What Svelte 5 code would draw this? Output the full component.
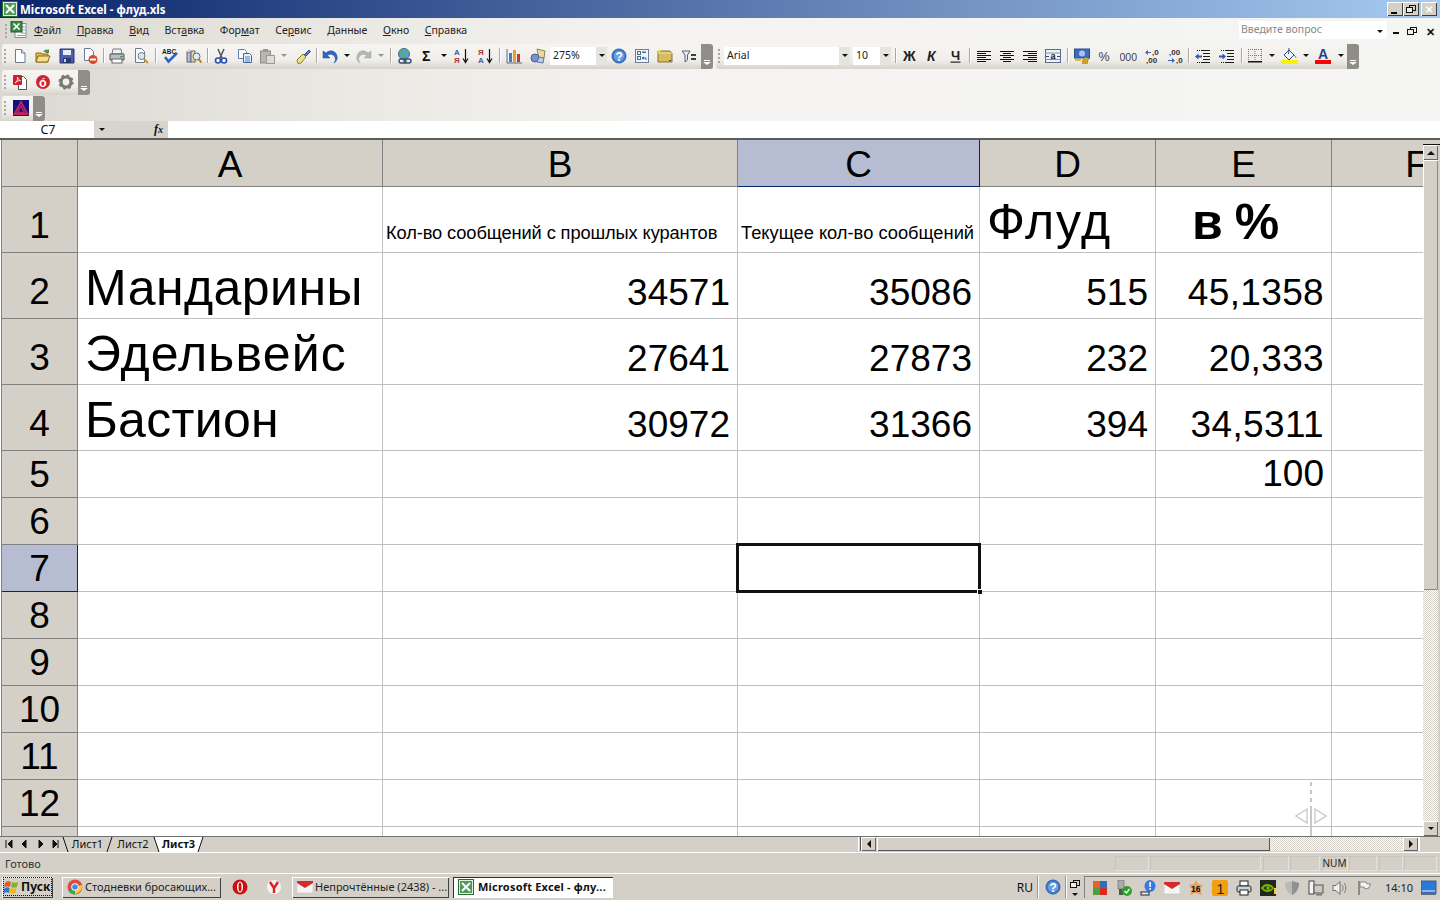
<script>
  const svg = (inner, w = 16, h = 16) => `<svg xmlns="http://www.w3.org/2000/svg" width="${w}" height="${h}" viewBox="0 0 ${w} ${h}" style="display:block">${inner}</svg>`;
  const page = `<path d="M3.5 1.5h6l3.500 3.500v9.500h-9.500z" fill="#fff" stroke="#6b7a90"/><path d="M9.500 1.500v3.500h3.500" fill="#e4e8f0" stroke="#6b7a90"/>`;
  const lines = (rows) => rows.map(([x, y, w]) => `<rect x="${x}" y="${y}" width="${w}" height="1" fill="#111"/>`).join('');
  const glyph = (t, x, y, size, fill, extra = '') => `<text x="${x}" y="${y}" font-family="Liberation Sans" font-size="${size}" fill="${fill}" ${extra}>${t}</text>`;
  const I = {
    new: svg(page),
    open: svg(`<path d="M1 5h5l1 1h6v8H1z" fill="#e8b84a" stroke="#8a6a20"/><path d="M3 8h12l-2.500 6H1z" fill="#f6dc8c" stroke="#8a6a20"/><path d="M8 4c1-2 3-3 5-2l1-1v4h-4l1-1c-1-.5-2-.5-3 0z" fill="#5a8a50"/>`),
    save: svg(`<path d="M1 1h14v14H1z" fill="#4a5fb0" stroke="#2a3570"/><rect x="4" y="2" width="8" height="5" fill="#e8ecf8"/><rect x="4" y="10" width="8" height="5" fill="#2a3570"/><rect x="5" y="11" width="2" height="3" fill="#cdd4ee"/>`),
    perm: svg(`<path d="M2.500 .5h6l3 3v9h-9z" fill="#fff" stroke="#6b7a90"/><circle cx="11" cy="11.500" r="4.500" fill="#d9482c"/><rect x="8" y="10.500" width="6" height="2" fill="#fff"/>`),
    print: svg(`<path d="M4 1h8l1 5H3z" fill="#f2f2f2" stroke="#777"/><path d="M1 6h14v6H1z" fill="#b9bec8" stroke="#555"/><rect x="3" y="11" width="10" height="4" fill="#fff" stroke="#666"/><rect x="11" y="8" width="3" height="1.500" fill="#2cae4a"/>`),
    preview: svg(`<path d="M2.500 .5h6l3 3v11h-9z" fill="#fff" stroke="#6b7a90"/><circle cx="8.500" cy="8" r="3.500" fill="#d2e6f4" stroke="#6a7a80"/><path d="M11 11l4 4" stroke="#c09830" stroke-width="2"/>`),
    spell: svg(`${glyph('ABC', 0, 6, 6.500, '#222', 'font-weight="700"')}<path d="M3 9l3.500 4.500L15 5" fill="none" stroke="#2f62b8" stroke-width="2.500"/>`),
    research: svg(`<rect x="1" y="4" width="4" height="10" fill="#b8b8ce" stroke="#667"/><rect x="5" y="3" width="4" height="11" fill="#e8d8a0" stroke="#667"/><rect x="2" y="1" width="2" height="3" fill="#d0d0e0"/><circle cx="10.500" cy="8.500" r="3.500" fill="#dcecf8" stroke="#667"/><path d="M12.500 11l3 3.500" stroke="#b08a20" stroke-width="2"/>`),
    cut: svg(`<path d="M5 1l4 9M11 1L7 10" stroke="#555" stroke-width="1.500"/><circle cx="5" cy="12.500" r="2.500" fill="#fff" stroke="#2d4ea8" stroke-width="1.600"/><circle cx="11" cy="12.500" r="2.500" fill="#fff" stroke="#2d4ea8" stroke-width="1.600"/>`),
    copy: svg(`<path d="M1.500 1.500h6l2 2v7h-8z" fill="#fff" stroke="#5f7fb8"/><path d="M6.500 5.500h6l2 2v7h-8z" fill="#eaf1fb" stroke="#3f66a8"/><path d="M8 9h5M8 11h5M8 13h5" stroke="#5f7fb8"/>`),
    paste: svg(`<rect x="1.500" y="3" width="10" height="12" fill="#b8b6ae" stroke="#8e8c84"/><rect x="4" y="1" width="5" height="3" fill="#9a9890"/><rect x="7.500" y="7.500" width="8" height="8" fill="#dedcd5" stroke="#9a9890"/>`),
    brush: svg(`<path d="M9 7l5-5 1.500 1.500-5 5z" fill="#5a7ac0" stroke="#30508c"/><path d="M2 12l6-6 3 3-5 6-3 .5z" fill="#efe08a" stroke="#8a7a30"/>`),
    undo: svg(`<path d="M1 3v7h7L5.500 7.500C8 5.500 11.500 6 13 9.500c1 2 0 4-1 5.500 3-1.500 4-5 2.500-8.500C12.500 2.500 8 1.500 4 5z" fill="#2f66c4" stroke="#1e488e" stroke-width=".5"/>`),
    redo: svg(`<path d="M15 3v7H8l2.500-2.500C8 5.500 4.500 6 3 9.500c-1 2 0 4 1 5.500C1 13.500 0 10 1.500 6.500 3.500 2.500 8 1.500 12 5z" fill="#b3b7ba" stroke="#a0a4a8" stroke-width=".5"/>`),
    link: svg(`<circle cx="7" cy="6" r="5.500" fill="#5c9ad8" stroke="#3c6a90"/><path d="M3 3c2 1 3 2 3 4s2 2 3 3M8 1c1 2 3 2 4 4" stroke="#5cae58" stroke-width="2" fill="none"/><rect x="2" y="11" width="7" height="4" rx="2" fill="none" stroke="#3a5070" stroke-width="1.400"/><rect x="7" y="11" width="7" height="4" rx="2" fill="none" stroke="#3a5070" stroke-width="1.400"/>`),
    sigma: svg(`${glyph('Σ', 2, 13, 14, '#111', 'font-weight="700"')}`),
    az: svg(`${glyph('А', 0, 7, 8, '#3a62a8', 'font-weight="700"')}${glyph('Я', 0, 15, 8, '#a83a3a', 'font-weight="700"')}<path d="M11.500 1v12M9 10.500l2.500 4 2.500-4" stroke="#111" fill="none" stroke-width="1.200"/>`),
    za: svg(`${glyph('Я', 0, 7, 8, '#a83a3a', 'font-weight="700"')}${glyph('А', 0, 15, 8, '#3a62a8', 'font-weight="700"')}<path d="M11.500 1v12M9 10.500l2.500 4 2.500-4" stroke="#111" fill="none" stroke-width="1.200"/>`),
    chart: svg(`<path d="M1 1v14h15" stroke="#5a6a90" fill="none"/><rect x="3" y="5" width="3" height="9" fill="#3f7fc8"/><rect x="7" y="2" width="3" height="12" fill="#e8a028"/><rect x="11" y="6" width="3" height="8" fill="#c83a28"/>`),
    draw: svg(`<path d="M7 1l8 2-1 7-5 1z" fill="#e8dca0" stroke="#8a8260"/><circle cx="5" cy="10" r="4" fill="#7a92d0" stroke="#4a5a90"/><path d="M9 9l5 1-1 5-6-1z" fill="#c0cce8" stroke="#6070a0"/>`),
    help: svg(`<circle cx="8" cy="8" r="7" fill="#3d7fd4" stroke="#2a5aa8"/><circle cx="8" cy="8" r="5" fill="#fff" opacity=".25"/>${glyph('?', 4.500, 12.500, 12, '#fff', 'font-weight="700"')}`),
    form: svg(`<rect x="1.500" y="1.500" width="13" height="13" fill="#f2f6fb" stroke="#6a7ea0"/><rect x="3.500" y="3.500" width="3" height="3" fill="none" stroke="#4a6a98"/><rect x="8" y="3.500" width="4" height="1.500" fill="#4a6a98"/><rect x="3.500" y="8.500" width="3" height="3" fill="none" stroke="#4a6a98"/><path d="M8 10h4v2M10 9l-2 1 2 1" stroke="#3a5a98" fill="none"/>`),
    folderStar: svg(`<path d="M1 3h12l2 2v9H1z" fill="#d9bc62" stroke="#85702e"/><path d="M1 5h14" stroke="#f0e09a"/><rect x="12" y="12" width="2" height="1" fill="#57481c"/><path d="M2 0l.8 2 2 .5-2 .8-.8 2-.8-2-1-.8 1-.5z" fill="#f4ec58"/>`),
    filter: svg(`<path d="M1 3h8L6.500 7v5L4 14V7z" fill="#e8eaee" stroke="#5a6270"/><rect x="10" y="6" width="5" height="2" fill="#39404a"/><rect x="10" y="10" width="5" height="2" fill="#39404a"/>`),
    bold: svg(`${glyph('Ж', 1, 13, 14, '#222', 'font-weight="700" font-family="Liberation Serif"')}`),
    italic: svg(`${glyph('К', 2, 13, 14, '#222', 'font-weight="700" font-style="italic"')}`),
    under: svg(`${glyph('Ч', 3, 12, 13, '#222', 'font-weight="700"')}<rect x="2.500" y="13.500" width="10" height="1.200" fill="#222"/>`),
    left: svg(lines([[1, 3, 14], [1, 5, 9], [1, 7, 14], [1, 9, 9], [1, 11, 14], [1, 13, 9]])),
    center: svg(lines([[1, 3, 14], [4, 5, 8], [1, 7, 14], [4, 9, 8], [1, 11, 14], [4, 13, 8]])),
    right: svg(lines([[1, 3, 14], [6, 5, 9], [1, 7, 14], [6, 9, 9], [1, 11, 14], [6, 13, 9]])),
    merge: svg(`<rect x=".5" y="1.500" width="15" height="13" fill="#eef3fa" stroke="#5a6a88"/><path d="M.5 5h15M.5 11.500h15" stroke="#8090a8"/><path d="M1 8.500h3M12 8.500h3" stroke="#234c90"/>${glyph('a', 5.500, 11, 9, '#111', 'font-weight="700"')}`),
    money: svg(`<rect x=".5" y="1" width="15" height="9" fill="#3f6cc0" stroke="#2a4a8a"/><circle cx="8" cy="5.500" r="3" fill="#a9c4ee"/><ellipse cx="12" cy="11" rx="3" ry="1.300" fill="#e6b83c" stroke="#9a7412" stroke-width=".6"/><ellipse cx="11" cy="13" rx="3" ry="1.300" fill="#e6b83c" stroke="#9a7412" stroke-width=".6"/><ellipse cx="11" cy="15" rx="3" ry="1" fill="#e6b83c" stroke="#9a7412" stroke-width=".6"/><path d="M1 12h6" stroke="#e6b83c" stroke-width="2"/>`),
    percent: svg(glyph('%', 1.500, 13, 12.500, '#3c3c3c')),
    thousand: svg(glyph('000', -.5, 12.500, 10.500, '#444'), 17, 16),
    incDec: svg(`<path d="M1 4h3V2l3 2.500L4 7V5H1z" transform="matrix(-1 0 0 1 8 0)" fill="#3d68b4"/>${glyph(',0', 8, 7, 8, '#333', 'font-weight="700"')}${glyph(',00', 2, 15, 8, '#333', 'font-weight="700"')}`),
    decDec: svg(`${glyph(',00', 2, 7, 8, '#333', 'font-weight="700"')}<path d="M1 12h4v-2l3 2.500L5 15v-2H1z" fill="#3d68b4"/>${glyph(',0', 9, 15, 8, '#333', 'font-weight="700"')}`),
    outdent: svg(`<path d="M6 2.500h9M8 5.500h7M8 8.500h7M8 11.500h7M6 14.500h9" stroke="#1b1b1b"/><path d="M2 2.500h3M2 14.500h3" stroke="#1b1b1b" stroke-dasharray="1 1"/><path d="M0 8.500l3.500-3v2H7v2H3.500v2z" fill="#2d5cb8"/>`),
    indent: svg(`<path d="M6 2.500h9M8 5.500h7M8 8.500h7M8 11.500h7M6 14.500h9" stroke="#1b1b1b"/><path d="M2 2.500h3M2 14.500h3" stroke="#1b1b1b" stroke-dasharray="1 1"/><path d="M7 8.500l-3.500-3v2H0v2h3.500v2z" fill="#2d5cb8"/>`),
    borders: svg(`<path d="M1.500 1v12M8 1v12M14.500 1v12M1 1.500h14M1 7.500h14" stroke="#777" stroke-dasharray="1 1" fill="none"/><rect x="1" y="13" width="14" height="1.500" fill="#111"/>`),
    fill: svg(`<path d="M3 8l5-5 5 5-5 5z" fill="#eef2fa" stroke="#35508c"/><path d="M8 1c0 3-.5 5-.5 6" stroke="#35508c"/><path d="M13 8c1 1 2 2 2 3" stroke="#777" fill="none"/><rect x="0" y="13" width="17" height="4" fill="#fff200"/>`, 17, 17),
    color: svg(`${glyph('A', 3, 12, 14, '#23418c', 'font-weight="700"')}<rect x="0" y="13" width="16" height="4" fill="#ff0000"/>`, 16, 17),
    pdf: svg(`<path d="M6.500 2.500h5l3 3v10h-8z" fill="#fff" stroke="#555"/><rect x="1" y="1" width="9" height="10" rx="1" fill="#cf1f2e"/><path d="M3 9c2-1 3-4 2.500-6 .5 2 1.500 3 3 3.500-2 0-4 1-5.500 2.500" fill="none" stroke="#fff" stroke-width=".8"/>`),
    opd: svg(`<circle cx="8" cy="8" r="7" fill="#d1212f"/>${glyph('ó', 4, 12.500, 12.500, '#fff', 'font-weight="700"')}`),
    gear: svg(`<circle cx="8" cy="8" r="5" fill="none" stroke="#7a7a72" stroke-width="3.200"/><circle cx="8" cy="8" r="6.400" fill="none" stroke="#7a7a72" stroke-width="2.400" stroke-dasharray="2.500 2.500"/>`),
    tri: svg(`<rect width="16" height="16" fill="#10107e"/><path d="M8 2l6.500 12h-13z" fill="none" stroke="#c8205c" stroke-width="1.800"/><path d="M8 6l3.500 6.500h-7z" fill="none" stroke="#b42060" stroke-width="1.500"/>`),
    xl: svg(`<rect x=".5" y=".5" width="15" height="15" fill="#e2efe2" stroke="#2b6b32"/><rect x="2" y="2" width="12" height="12" fill="#4f9a5a"/><path d="M4 4l8 8M12 4l-8 8" stroke="#fff" stroke-width="2"/>`),
    xlDoc: svg(`<path d="M5 2.500h11v14H5z" fill="#fff" stroke="#7a8aa8"/><path d="M11 6h4M11 9h4M11 12h4M7 14.500h8" stroke="#8aa0c0"/><rect x="1" y="0" width="11" height="11" fill="#3a8a48" stroke="#1d5a2a"/><path d="M3.500 2.500l6 6M9.500 2.500l-6 6" stroke="#fff" stroke-width="1.600"/>`, 17, 18),
    win: svg(`<path d="M1 4c2-2 4-2 6-1L6 8C4 7 2 7 0 9z" fill="#e0572c"/><path d="M8 3c2 1 4 1 6 0l-1 5c-2 1-4 1-6 0z" fill="#78b72a"/><path d="M0 10c2-2 4-2 5.500-1L5 14c-2-1-4-1-6 1z" fill="#3477c8"/><path d="M6.500 9c2 1 4 1 6 0l-1 5c-2 1-4 1-6 0z" fill="#f2b71c"/>`),
    chrome: svg(`<circle cx="8" cy="8" r="7.500" fill="#dd4b3c"/><path d="M8 8L1.500 12c1 2 4 3.500 6.500 3.500z" fill="#3aa757"/><path d="M8 8l7-2c.7 3 0 6.500-7 9.500z" fill="#fcc934"/><circle cx="8" cy="8" r="3.700" fill="#fff"/><circle cx="8" cy="8" r="2.800" fill="#4285f4"/>`),
    opera: svg(`<ellipse cx="8" cy="8" rx="7.500" ry="7.500" fill="#cc1010"/><ellipse cx="8" cy="8" rx="3" ry="5.500" fill="#fff"/><ellipse cx="8" cy="8" rx="1.500" ry="4.500" fill="#cc1010"/>`),
    yandex: svg(`<circle cx="8" cy="8" r="7.500" fill="#f4f2ee" stroke="#c8c6c0" stroke-width=".5"/><path d="M4 3l4 6v5M12 3L8 9" stroke="#e02020" stroke-width="2.400" fill="none"/>`),
    mail: svg(`<rect y="3" width="16" height="11" fill="#f4f4f4" stroke="#bbb" stroke-width=".5"/><path d="M0 2h16v2L8 9 0 4z" fill="#d52b2b"/>`),
    avg: svg(`<rect x="1" y="1" width="7" height="7" fill="#e8641c"/><rect x="8" y="1" width="7" height="7" fill="#2e6fbc"/><rect x="1" y="8" width="7" height="7" fill="#4aa040"/><rect x="8" y="8" width="7" height="7" fill="#d82a20"/>`),
    plug: svg(`<rect x="2" y="0" width="6" height="9" fill="#aaa" stroke="#555" stroke-width=".5"/><rect x="3" y="9" width="4" height="6" fill="#555"/><circle cx="11" cy="11" r="5" fill="#2ea02e"/><path d="M8.500 11l2 2 3-4" stroke="#fff" stroke-width="1.300" fill="none"/>`),
    netAlert: svg(`<ellipse cx="10" cy="6" rx="5.500" ry="6" fill="#3a7ae0"/><rect x="9.300" y="2" width="1.600" height="5" fill="#fff"/><rect x="9.300" y="8" width="1.600" height="1.600" fill="#fff"/><rect x="1" y="12" width="8" height="3" fill="#eee" stroke="#223"/>`),
    badge16: svg(`<path d="M8 0l2 4 5 1-3 4 2 6-6-2-6 2 2-6-3-4 5-1z" fill="#e8a060"/>${glyph('16', 3, 11.500, 8.500, '#111', 'font-weight="700"')}`),
    one: svg(`<rect width="16" height="16" rx="2" fill="#f2a012"/>${glyph('1', 4.500, 13.500, 14, '#222')}`),
    printer: svg(`<rect x="4" y="1" width="8" height="5" fill="#fff" stroke="#222"/><rect x="1" y="6" width="14" height="6" rx="1.500" fill="#c8d2dc" stroke="#222"/><rect x="4" y="10" width="8" height="5" fill="#fff" stroke="#222"/>`),
    nvidia: svg(`<rect width="16" height="16" fill="#23281e"/><path d="M2 8c3-4 8-4 11 0-3 4-8 4-11 0z" fill="none" stroke="#7ab800" stroke-width="1.800"/><circle cx="8" cy="8" r="1.800" fill="#7ab800"/><rect x="14" y="8" width="2" height="6" fill="#f6d020"/>`),
    shield: svg(`<path d="M1 3l7-2 7 2c0 6-3 10-7 12-4-2-7-6-7-12z" fill="#b8bab6"/><path d="M8 1l7 2c0 6-3 10-7 12z" fill="#90928e"/>`),
    netPc: svg(`<rect x="1" y="1" width="5" height="13" fill="#f4f4f4" stroke="#444"/><rect x="6" y="5" width="9" height="8" fill="#c8c8c4" stroke="#555"/><rect x="8" y="14" width="6" height="1.500" fill="#777"/>`),
    speaker: svg(`<path d="M1 5.500h3l4-4v13l-4-4H1z" fill="#f0f0ee" stroke="#6a6a66"/><path d="M10 5c1.500 2 1.500 4 0 6M12 3c2.500 3 2.500 7 0 10" fill="none" stroke="#7a7a76"/>`),
    flag: svg(`<path d="M3 1v14" stroke="#666" stroke-width="1.300"/><path d="M4 2h6l1 2h4l-2 3 0 1-4 1-1-2H4z" fill="#f4f4f2" stroke="#888"/>`),
    desktop: svg(`<rect y="1" width="15" height="12" fill="#2a78d8" stroke="#4a5a78"/><path d="M1 10h13v2H1z" fill="#8ab8ee"/><rect y="13" width="15" height="2" fill="#5a6a88"/>`),
    restoreSm: svg(`<rect x="3.500" y="1.500" width="6" height="5" fill="none" stroke="#111"/><rect x=".5" y="3.500" width="6" height="5" fill="#eee" stroke="#111"/>`, 10, 10)
  };

  const row1 = [['g', 6], ['new', 23], ['open', 24], ['save', 23], ['perm', 23], ['s', 4], ['print', 24], ['preview', 24], ['s', 5], ['spell', 24], ['research', 23], ['s', 4], ['cut', 24], ['copy', 23], ['paste', 22], ['d', 12, 1], ['brush', 25], ['s', 3], ['undo', 23], ['d', 12], ['redo', 22], ['d', 12, 1], ['s', 6], ['link', 24], ['sigma', 21], ['d', 12], ['az', 24], ['za', 23], ['s', 5], ['chart', 24], ['draw', 24]];
  const row1b = [['help', 23], ['form', 23], ['folderStar', 23], ['filter', 25]];
  const row2a = [['s', 8], ['bold', 22], ['italic', 23], ['under', 23], ['s', 5], ['left', 23], ['center', 23], ['right', 23], ['merge', 23], ['s', 6], ['money', 24], ['percent', 22], ['thousand', 24], ['incDec', 23], ['decDec', 23], ['s', 5], ['outdent', 24], ['indent', 23], ['s', 6], ['borders', 22], ['d', 12], ['fill', 22], ['d', 12], ['color', 22], ['d', 13]];
  const menu = [['', 'Ф', 'айл'], ['', 'П', 'равка'], ['', 'В', 'ид'], ['Вст', 'а', 'вка'], ['Фор', 'м', 'ат'], ['Се', 'р', 'вис'], ['', 'Д', 'анные'], ['', 'О', 'кно'], ['', 'С', 'правка']];

  const cols = ['A', 'B', 'C', 'D', 'E', 'F'];
  const rows = [
    { n: 1, h: 'r-tall', cells: ['', { t: 'Кол-во сообщений с прошлых курантов', c: 'small tight' }, { t: 'Текущее кол-во сообщений', c: 'small' }, { t: 'Флуд', c: 'big ls-f' }, { t: 'в %', c: 'big bold' }, ''] },
    { n: 2, h: 'r-tall', cells: [{ t: 'Мандарины', c: 'big ls-m' }, { t: '34571', c: 'num' }, { t: '35086', c: 'num' }, { t: '515', c: 'num' }, { t: '45,1358', c: 'num dec' }, ''] },
    { n: 3, h: 'r-tall', cells: [{ t: 'Эдельвейс', c: 'big ls-e' }, { t: '27641', c: 'num' }, { t: '27873', c: 'num' }, { t: '232', c: 'num' }, { t: '20,333', c: 'num dec' }, ''] },
    { n: 4, h: 'r-tall', cells: [{ t: 'Бастион', c: 'big ls-b' }, { t: '30972', c: 'num' }, { t: '31366', c: 'num' }, { t: '394', c: 'num' }, { t: '34,5311', c: 'num dec' }, ''] },
    { n: 5, h: '', cells: ['', '', '', '', { t: '100', c: 'num low' }, ''] }
  ];
  for (let n = 6; n <= 13; n++) rows.push({ n, h: '', cells: ['', '', '', '', '', ''] });
  const panels = [34, 111, 26, 30, 26, 28, 24, 33];
  const tray = ['avg', 'plug', 'netAlert', 'mail', 'badge16', 'one', 'printer', 'nvidia', 'shield', 'netPc', 'speaker', 'flag'];
</script>

<div class="app">
  <header class="title">
    <span class="t-icon">{@html I.xl}</span>
    <span class="t-text">Microsoft Excel - флуд.xls</span>
    <div class="win-btns">
      <button class="wb"><i class="w-min"></i></button>
      <button class="wb"><span>{@html I.restoreSm}</span></button>
      <button class="wb x-gap">✕</button>
    </div>
  </header>

  <div class="commands">
    <nav class="menu">
      <i class="grip menu-grip"></i>
      <span class="doc">{@html I.xlDoc}</span>
      <div class="menu-items">
        {#each menu as m}<span>{m[0]}<u>{m[1]}</u>{m[2]}</span>{/each}
      </div>
      <div class="ask"><span>Введите вопрос</span></div>
      <i class="arr ask-arr"></i>
      <i class="doc-min"></i>
      <span class="doc-rest">{@html I.restoreSm}</span>
      <span class="doc-x">✕</span>
    </nav>

    <div class="tb-row">
      <div class="tb">
        {#each row1 as [k, w, dim]}
          {#if k === 'g'}<span class="cell" style="width:{w}px"><i class="grip"></i></span>
          {:else if k === 's'}<span class="cell" style="width:{w}px"><i class="sep"></i></span>
          {:else if k === 'd'}<span class="cell" style="width:{w}px"><i class="arr" class:dim></i></span>
          {:else}<span class="cell" style="width:{w}px">{@html I[k]}</span>{/if}
        {/each}
        <div class="combo zoom"><span>275%</span><b><i class="arr"></i></b></div>
        {#each row1b as [k, w]}<span class="cell" style="width:{w}px">{@html I[k]}</span>{/each}
        <span class="chev"><i class="chev-line"></i><i class="arr"></i></span>
      </div>
      <div class="tb second">
        <span class="cell grip-cell"><i class="grip"></i></span>
        <div class="combo font"><span>Arial</span><b><i class="arr"></i></b></div>
        <div class="combo size"><span>10</span><b><i class="arr"></i></b></div>
        {#each row2a as [k, w]}
          {#if k === 's'}<span class="cell" style="width:{w}px"><i class="sep"></i></span>
          {:else if k === 'd'}<span class="cell" style="width:{w}px"><i class="arr"></i></span>
          {:else}<span class="cell" style="width:{w}px">{@html I[k]}</span>{/if}
        {/each}
        <span class="chev"><i class="chev-line"></i><i class="arr"></i></span>
      </div>
    </div>

    <div class="tb-row r2">
      <div class="tb">
        <span class="cell grip-cell"><i class="grip"></i></span>
        <span class="cell w23">{@html I.pdf}</span>
        <span class="cell w23">{@html I.opd}</span>
        <span class="cell w24">{@html I.gear}</span>
        <span class="chev"><i class="chev-line"></i><i class="arr"></i></span>
      </div>
    </div>
    <div class="tb-row r3">
      <div class="tb">
        <span class="cell grip-cell"><i class="grip"></i></span>
        <span class="cell w25">{@html I.tri}</span>
        <span class="chev"><i class="chev-line"></i><i class="arr"></i></span>
      </div>
    </div>
  </div>

  <div class="formula">
    <div class="namebox">C7</div>
    <div class="nb-drop"><i class="arr"></i></div>
    <div class="fx">f<small>x</small></div>
    <div class="f-input"></div>
  </div>

  <main class="sheet-wrap">
    <div class="sheet">
      <div class="corner"></div>
      {#each cols as c}<div class="ch" class:sel={c === 'C'}>{c}</div>{/each}
      {#each rows as r}
        <div class="rh {r.h}" class:sel={r.n === 7}>{r.n < 13 ? r.n : ''}</div>
        {#each r.cells as cell, i}
          <div class="c {r.h} {cell ? cell.c : ''}" class:cur={r.n === 7 && i === 2}>{cell ? cell.t : ''}</div>
        {/each}
      {/each}
    </div>
    <aside class="vscroll">
      <div class="v-top"></div>
      <div class="sb-btn"><i class="arr up"></i></div>
      <div class="v-thumb"></div>
      <div class="v-track"></div>
      <div class="sb-btn"><i class="arr"></i></div>
    </aside>
    <div class="split-hint">
      <i class="split-line"></i>
      <svg width="32" height="18" viewBox="0 0 32 18"><path d="M12 2L1 9l11 7zM20 2l11 7-11 7z" fill="#fff" stroke="#c8c8c8" stroke-width="1.300"/></svg>
    </div>
  </main>

  <div class="tabs-row">
    <div class="tab-nav">
      <svg width="58" height="14" viewBox="0 0 58 14">
        <path d="M3 3v8M9 3v8L5 7zM23 3v8l-4-4zM36 3v8l4-4zM50 3v8l4-4zM55 3v8" fill="#111" stroke="#111"/>
      </svg>
    </div>
    <div class="tabs">
      <svg width="8" height="15" viewBox="0 0 8 15"><path d="M1 0l5 15" stroke="#111" fill="none"/></svg>
      <span class="tab t1">Лист1</span>
      <svg width="8" height="15" viewBox="0 0 8 15"><path d="M7 0L2 15" stroke="#111" fill="none"/></svg>
      <span class="tab t2">Лист2</span>
      <svg width="8" height="15" viewBox="0 0 8 15"><path d="M1 0l5 15h2V0z" fill="#fff"/><path d="M1 0l5 15" stroke="#111" fill="none"/></svg>
      <span class="tab on">Лист3</span>
      <svg width="8" height="15" viewBox="0 0 8 15"><path d="M7 0L2 15H0V0z" fill="#fff"/><path d="M7 0L2 15" stroke="#111" fill="none"/></svg>
    </div>
    <div class="h-scroll">
      <i class="split"></i>
      <div class="sb-btn h"><i class="arr left-a"></i></div>
      <div class="h-thumb"></div>
      <div class="h-track"></div>
      <div class="sb-btn h"><i class="arr right-a"></i></div>
      <div class="h-end"></div>
    </div>
  </div>

  <div class="status">
    <span class="ready">Готово</span>
    <div class="panels">
      {#each panels as w, i}<span class="panel" style="width:{w}px">{i === 4 ? 'NUM' : ''}</span>{/each}
    </div>
  </div>

  <footer class="taskbar">
    <button class="start"><span class="focus">{@html I.win}<b>Пуск</b></span></button>
    <button class="task w159">{@html I.chrome}<span>Стодневки бросающих...</span></button>
    <span class="quick q1">{@html I.opera}</span>
    <span class="quick q2">{@html I.yandex}</span>
    <button class="task w157">{@html I.mail}<span>Непрочтённые (2438) - ...</span></button>
    <button class="task pressed">{@html I.xl}<span>Microsoft Excel - флу...</span></button>
    <div class="grow"></div>
    <span class="lang">RU</span>
    <i class="tb-sep"></i>
    <span class="tb-help">{@html I.help}</span>
    <i class="tb-sep"></i>
    <span class="tb-restore">{@html I.restoreSm}<i class="arr"></i></span>
    <div class="tray">
      {#each tray as t}<span class="tray-ic">{@html I[t]}</span>{/each}
      <span class="clock">14:10</span>
      <span class="tray-end">{@html I.desktop}</span>
    </div>
  </footer>
</div>

<style>
  :global(body) { margin: 0; background: #d4d0c8; }
  .app { width: 1440px; height: 900px; overflow: hidden; display: flex; flex-direction: column; font-family: "Noto Sans", "Open Sans", sans-serif; color: #111; background: #d4d0c8; }
  button { font: inherit; color: inherit; margin: 0; }
  i { display: block; }

  .title { height: 18px; flex: none; display: flex; align-items: center; background: linear-gradient(90deg, #0a246a, #a6caf0); color: #fff; }
  .t-icon { margin-left: 2px; width: 18px; }
  .t-text { font-size: 11.500px; font-weight: 700; white-space: nowrap; }
  .win-btns { margin-left: auto; display: flex; margin-right: 3px; }
  .wb { width: 16px; height: 14px; padding: 0; background: #d4d0c8; border: 0; box-shadow: inset 1px 1px #fff, inset -1px -1px #404040; display: flex; align-items: center; justify-content: center; font-size: 10px; font-weight: 700; line-height: 1; position: relative; }
  .x-gap { margin-left: 2px; }
  .w-min { width: 6px; height: 2px; background: #000; margin: 7px 3px 0 0; }

  .commands { flex: none; height: 103px; display: flex; flex-direction: column; background: linear-gradient(90deg, #dbd8d1 0, #ebe9e4 25%, #f4f3f1 45%, #f5f5f4 100%); }
  .menu { height: 26px; display: flex; align-items: center; font-size: 10.500px; flex: none; }
  .menu-grip { margin-left: 5px; }
  .doc { margin-left: 3px; width: 18px; margin-top: -3px; }
  .menu-items { margin-left: 6px; display: flex; gap: 15.500px; white-space: nowrap; width: 1205px; color: #222; padding-bottom: 2px; box-sizing: border-box; flex: none; }
  .ask { width: 148px; height: 18px; background: #fff; color: #888; font-size: 10.500px; line-height: 16px; text-indent: 2px; margin-top: -2px; flex: none; }
  .ask-arr { margin-left: -10px; }
  .doc-min { width: 6px; height: 2px; background: #111; margin: 4px 0 0 10px; }
  .doc-rest { margin-left: 8px; }
  .doc-x { margin-left: 9px; font-size: 11px; font-weight: 700; line-height: 1; }

  .tb-row { display: flex; gap: 3px; margin-left: 2px; height: 25px; flex: none; }
  .r2 { height: 26px; margin-top: 1px; }
  .r3 { height: 25px; }
  .tb { display: flex; align-items: center; height: 25px; background: linear-gradient(180deg, #f6f5f3 0, #efeeea 65%, #d6d3cb 100%); border-radius: 3px 0 0 3px; }
  .cell { display: flex; align-items: center; justify-content: center; height: 100%; flex: none; padding-bottom: 2px; box-sizing: border-box; }
  .grip-cell { width: 6px; }
  .w23 { width: 23px; }
  .w24 { width: 24px; }
  .w25 { width: 25px; }
  .grip { width: 2px; height: 14px; background: repeating-linear-gradient(180deg, #a8a69e 0 2px, transparent 2px 4px); }
  .sep { width: 1px; height: 15px; background: #aaa89f; box-shadow: 1px 0 #fff; }
  .arr { width: 0; height: 0; border: 3px solid transparent; border-top: 3px solid #111; border-bottom: 0; flex: none; }
  .arr.dim { border-top-color: #97958d; }
  .arr.up { border-top: 0; border-bottom: 4px solid #111; border-left-width: 4px; border-right-width: 4px; }
  .arr.left-a { border: 4px solid transparent; border-left: 0; border-right: 4px solid #111; }
  .arr.right-a { border: 4px solid transparent; border-right: 0; border-left: 4px solid #111; }
  .chev { width: 12px; height: 25px; flex: none; background: #8f8d88; border-radius: 0 3px 3px 0; display: flex; flex-direction: column; align-items: center; justify-content: flex-end; padding-bottom: 4px; box-sizing: border-box; gap: 1px; }
  .chev-line { width: 6px; height: 1px; background: #fff; }
  .chev .arr { border-top-color: #fff; border-left-width: 4px; border-right-width: 4px; border-top-width: 3px; }

  .combo { display: flex; height: 18px; background: #fff; font-size: 10.500px; line-height: 16px; color: #222; flex: none; margin-bottom: 2px; }
  .combo span { flex: 1; padding-left: 3px; }
  .combo b { width: 11px; background: #e6e4de; display: flex; align-items: center; justify-content: center; }
  .zoom { width: 57px; }
  .font { width: 126px; margin-left: 2px; margin-right: 3px; }
  .size { width: 38px; }

  .formula { height: 17px; flex: none; display: flex; align-items: stretch; background: #fff; }
  .namebox { width: 92px; margin-left: 2px; font-size: 12.500px; text-align: center; line-height: 17px; font-family: "Noto Sans", sans-serif; }
  .nb-drop { width: 16px; background: #d7d4cd; display: flex; align-items: center; justify-content: center; }
  .fx { width: 58px; background: #d7d4cd; text-align: right; padding-right: 5px; box-sizing: border-box; font: italic 700 12px/17px "Liberation Serif", serif; }
  .fx small { font-size: 10px; }
  .f-input { flex: 1; }

  .sheet-wrap { position: relative; height: 698px; flex: none; display: flex; border-top: 2px solid #5c5c5c; box-sizing: border-box; background: linear-gradient(90deg, #fff 1px, #808080 1px 2px, #fff 2px); padding-left: 2px; }
  .sheet { width: 1421px; height: 696px; overflow: hidden; display: grid; grid-template-columns: 76px 305px 355px 242px 176px 176px 170px; grid-auto-rows: min-content; font-family: "Liberation Sans", Arial, sans-serif; flex: none; }
  .corner, .ch, .rh { background: #d4d0c8; box-sizing: border-box; border-right: 1px solid #808080; border-bottom: 1px solid #808080; display: flex; align-items: center; justify-content: center; font-size: 37px; line-height: 1; color: #000; }
  .corner, .ch { height: 47px; }
  .ch { padding-top: 2px; }
  .rh { height: 47px; padding-top: 1px; }
  .rh.r-tall { height: 66px; padding-top: 12px; }
  .ch.sel, .rh.sel { background: #b6bdd2; border-right-color: #0a246a; border-bottom-color: #0a246a; }
  .c { height: 47px; box-sizing: border-box; border-right: 1px solid #c0c0c0; border-bottom: 1px solid #c0c0c0; white-space: nowrap; overflow: hidden; color: #000; display: flex; align-items: flex-end; position: relative; }
  .c.r-tall { height: 66px; }
  .small { font-size: 18.300px; line-height: 1; padding: 0 0 10px 3px; }
  .tight { letter-spacing: -.12px; }
  .num { font-size: 37px; line-height: 1; justify-content: flex-end; padding: 0 7px 7px 0; }
  .num.low { padding-bottom: 5px; }
  .dec { letter-spacing: .35px; }
  .big { font-size: 50px; line-height: 1; padding: 0 0 5px 7px; }
  .ls-f { letter-spacing: 1.700px; }
  .ls-m { letter-spacing: .45px; }
  .ls-e { letter-spacing: 1.150px; }
  .ls-b { letter-spacing: .3px; }
  .bold { font-weight: 700; padding-left: 36px; letter-spacing: -1px; }
  .cur { overflow: visible; z-index: 2; }
  .cur::before { content: ""; position: absolute; left: -2px; top: -2px; right: -2px; bottom: -2px; border: 3px solid #111; }
  .cur::after { content: ""; position: absolute; right: -3px; bottom: -3px; width: 4px; height: 4px; background: #111; border-left: 1px solid #fff; border-top: 1px solid #fff; }

  .vscroll { width: 17px; flex: none; display: flex; flex-direction: column; background: #d4d0c8; }
  .v-top { height: 5px; flex: none; border-bottom: 1px solid #111; box-sizing: border-box; }
  .sb-btn { flex: none; width: 15px; height: 15px; background: #d4d0c8; box-shadow: inset 1px 1px #fff, inset -1px -1px #666; display: flex; align-items: center; justify-content: center; }
  .sb-btn.h { height: 14px; }
  .v-thumb { height: 430px; width: 15px; flex: none; background: #d4d0c8; box-shadow: inset 1px 1px #fff, inset -1px -1px #8a8a8a; }
  .v-track { flex: 1; width: 15px; background: repeating-conic-gradient(#d4d0c8 0 25%, #fff 0 50%) 0 0 / 2px 2px; }
  .split-hint { position: absolute; left: 1295px; top: 642px; width: 32px; height: 54px; }
  .split-line { position: absolute; left: 15px; top: 0; width: 2px; height: 54px; background: linear-gradient(#c8c8c8, #c8c8c8) 0 100% / 2px 28px no-repeat, repeating-linear-gradient(180deg, #c8c8c8 0 4px, transparent 4px 8px); }
  .split-hint svg { position: absolute; left: 0; top: 25px; }

  .tabs-row { height: 16px; flex: none; display: flex; align-items: flex-start; border-top: 1px solid #707070; box-sizing: border-box; font-size: 11px; background: #d4d0c8; }
  .tab-nav { width: 62px; flex: none; padding-left: 3px; box-sizing: border-box; }
  .tabs { display: flex; width: 796px; flex: none; height: 15px; }
  .tab { text-align: center; line-height: 14px; flex: none; }
  .t1 { width: 35px; }
  .t2 { width: 40px; }
  .tab.on { background: #fff; font-weight: 700; width: 35px; }
  .h-scroll { flex: 1; display: flex; align-items: flex-start; height: 15px; }
  .split { width: 3px; height: 14px; background: #d4d0c8; box-shadow: inset 1px 0 #fff, inset -1px 0 #555; flex: none; }
  .h-thumb { width: 393px; height: 14px; flex: none; background: #d4d0c8; box-shadow: inset 1px 1px #fff, inset -1px -1px #555; margin-left: 1px; }
  .h-track { width: 133px; height: 14px; flex: none; background: repeating-conic-gradient(#d4d0c8 0 25%, #fff 0 50%) 0 0 / 2px 2px; }
  .h-end { flex: 1; height: 14px; box-shadow: inset 2px 0 #fff; }

  .status { height: 22px; flex: none; box-sizing: border-box; border-top: 1px solid #fff; border-bottom: 1px solid #fff; display: flex; align-items: center; font-size: 11px; background: #d4d0c8; }
  .ready { margin-left: 5px; color: #333; }
  .panels { margin-left: auto; margin-right: 3px; display: flex; gap: 1.500px; height: 15px; }
  .panel { box-sizing: border-box; border-top: 1px solid #c8c4bc; border-left: 1px solid #c8c4bc; border-right: 1px solid #e4e2dc; border-bottom: 1px solid #e4e2dc; text-align: center; line-height: 13px; font-size: 10px; color: #222; padding-right: 5px; white-space: nowrap; }

  .taskbar { height: 26px; flex: none; display: flex; align-items: center; background: #d4d0c8; font-size: 11px; padding-left: 2px; box-sizing: border-box; }
  .task, .start { height: 21px; padding: 0 0 1px; background: #d4d0c8; border: 0; box-shadow: inset 1px 1px #fff, inset -1px -1px #404040; display: flex; align-items: center; flex: none; white-space: nowrap; }
  .start { width: 51px; }
  .focus { display: flex; align-items: center; width: 47px; height: 17px; margin-left: 2px; outline: 1px dotted #111; font-size: 12px; gap: 1px; overflow: hidden; }
  .focus b { font-weight: 700; }
  .task { gap: 2px; padding-left: 5px; box-sizing: border-box; color: #222; }
  .w159 { width: 159px; margin-left: 9px; }
  .w157 { width: 157px; }
  .quick { width: 34px; display: flex; justify-content: center; flex: none; }
  .q1 { margin-left: 2px; }
  .q2 { margin-right: 1px; }
  .task.pressed { width: 160px; margin-left: 4px; background: #fff; box-shadow: inset 1px 1px #303030, inset -1px -1px #fff; font-weight: 700; color: #111; letter-spacing: .2px; gap: 4px; }
  .grow { flex: 1; }
  .lang { margin-right: 4px; font-size: 12px; }
  .tb-sep { width: 1px; height: 22px; background: #9a978f; box-shadow: 1px 0 #fff; flex: none; }
  .tb-help { margin: 0 4px 0 7px; }
  .tb-restore { width: 18px; display: flex; flex-direction: column; align-items: center; gap: 4px; }
  .tray { width: 356px; height: 22px; flex: none; box-sizing: border-box; display: flex; align-items: center; border-top: 1px solid #808080; border-left: 1px solid #808080; padding-left: 3px; }
  .tray-ic { width: 24px; flex: none; display: flex; justify-content: center; }
  .clock { margin-left: 9px; width: 36px; color: #222; flex: none; }
</style>
